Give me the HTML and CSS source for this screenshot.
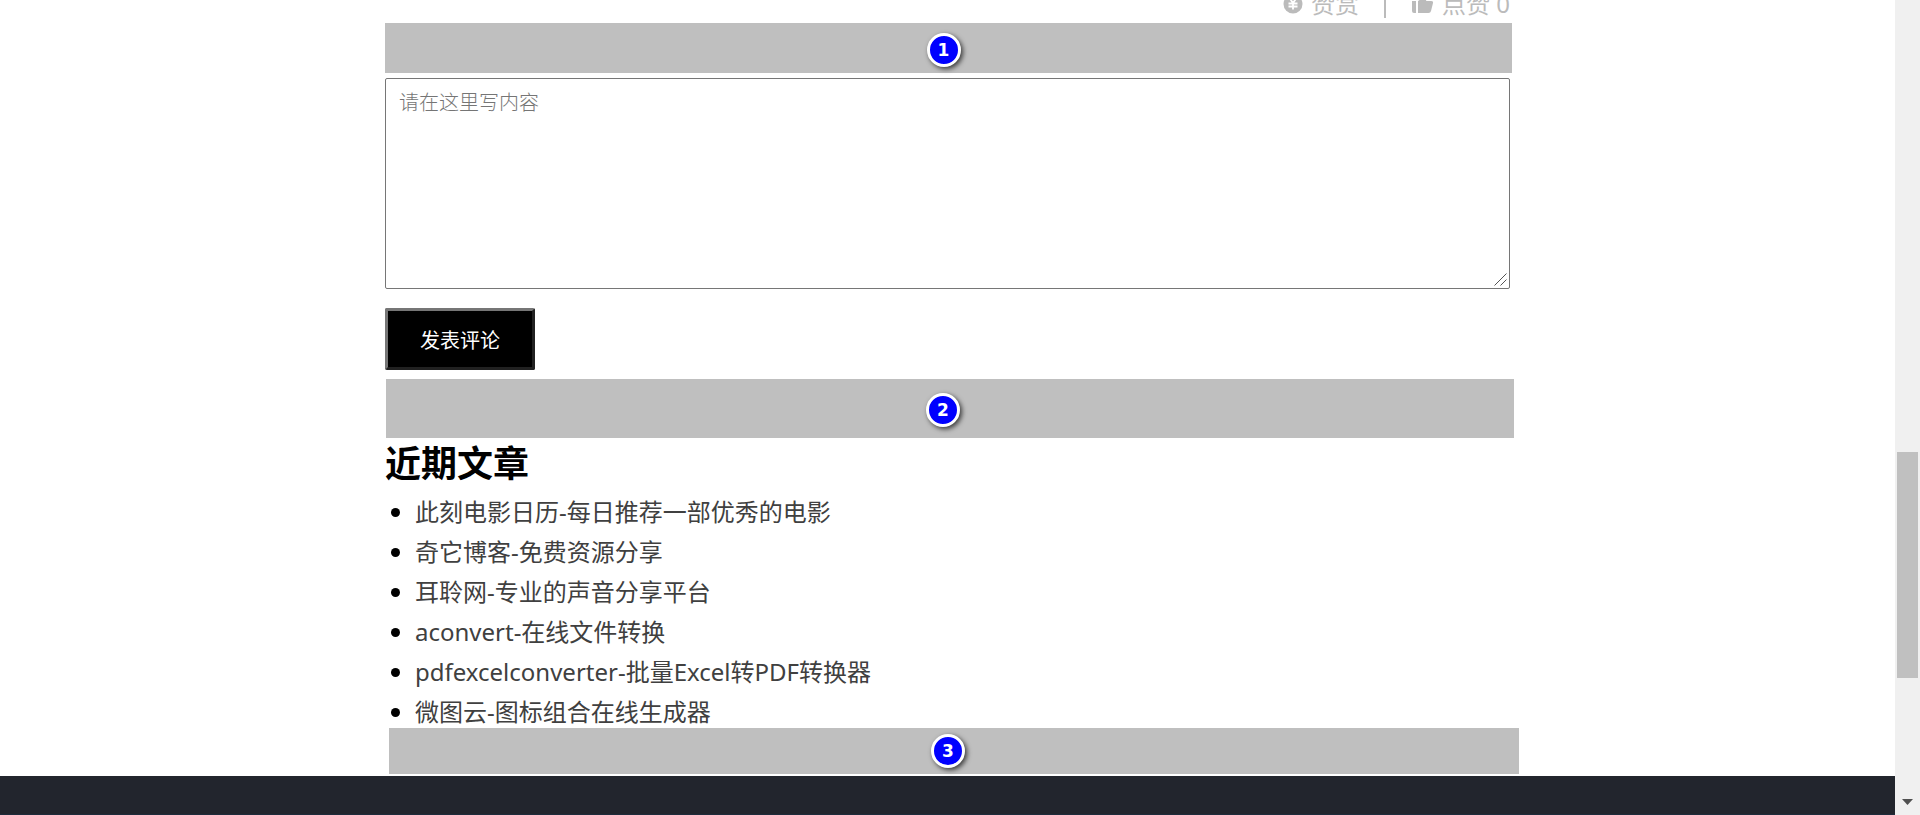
FILE: index.html
```html
<!DOCTYPE html>
<html lang="zh-CN">
<head>
<meta charset="utf-8">
<title>近期文章</title>
<link rel="stylesheet" href="styles.css">
</head>
<body>
<div class="window">
  <div class="page">
    <main class="content">
      <div class="actions">
        <a class="action" href="#reward">
          <svg class="icon" viewBox="0 0 20 20" aria-hidden="true"><circle cx="10" cy="10" r="9.500" fill="currentColor"/><path d="M6.500 4l3.500 5 3.500-5M10 9v6.500M5.500 9.500h9M5.500 12.500h9" fill="none" stroke="#fff" stroke-width="1.800"/></svg>
          <span>赞赏</span>
        </a>
        <span class="divider"></span>
        <a class="action" href="#like">
          <svg class="icon icon-like" viewBox="0 0 22 20" aria-hidden="true"><path d="M0 7h4v12H2Q0 19 0 17zM6 7q4-2 4-5 0-2 2-2 3 0 3 4l-1 3h5q2.500 0 2 2l-2 8q-.5 2-2.500 2H6z" fill="currentColor"/></svg>
          <span>点赞 0</span>
        </a>
      </div>
      <div class="slot slot-first"><span class="marker">1</span></div>
      <form class="comment">
        <div class="comment-field">
          <textarea class="comment-text" aria-label="评论内容" placeholder="请在这里写内容"></textarea>
          <svg class="grip" viewBox="0 0 13 13" aria-hidden="true"><path d="M.5 12.500l12-12M6.500 12.500l6-6" stroke="#555" fill="none"/></svg>
        </div>
        <button class="comment-submit" type="button">发表评论</button>
      </form>
      <div class="slot slot-second"><span class="marker">2</span></div>
      <section class="recent">
        <h2 class="recent-title">近期文章</h2>
        <ul class="recent-list">
          <li><a href="#p1">此刻电影日历-每日推荐一部优秀的电影</a></li>
          <li><a href="#p2">奇它博客-免费资源分享</a></li>
          <li><a href="#p3">耳聆网-专业的声音分享平台</a></li>
          <li><a href="#p4">aconvert-在线文件转换</a></li>
          <li><a href="#p5">pdfexcelconverter-批量Excel转PDF转换器</a></li>
          <li><a href="#p6">微图云-图标组合在线生成器</a></li>
        </ul>
      </section>
      <div class="slot slot-third"><span class="marker">3</span></div>
    </main>
    <footer class="footer"></footer>
  </div>
  <div class="scrollbar" aria-hidden="true">
    <div class="thumb"></div>
    <svg class="arrow" viewBox="0 0 11 6"><path d="M0 0h11L5.500 6z" fill="#505050"/></svg>
  </div>
</div>
</body>
</html>
```
FILE: styles.css
```css
* { box-sizing: border-box; }
body {
  margin: 0;
  overflow: hidden;
  background: #fff;
  color: #000;
  font-family: "Noto Sans", "Noto Sans CJK SC", sans-serif;
  font-size: 24px;
}
a { color: inherit; text-decoration: none; }
.window { display: flex; height: 100vh; }
.page { flex: 1; display: flex; flex-direction: column; min-width: 0; }
.content { width: 100%; max-width: 1125px; margin: 0 auto; }

.actions {
  display: flex;
  justify-content: flex-end;
  align-items: flex-end;
  height: 23px;
  color: #bbb;
  line-height: 38px;
}
.action { display: flex; align-items: center; gap: 8px; height: 38px; }
.icon { width: 20px; height: 20px; }
.icon-like { width: 22px; }
.divider { width: 2px; height: 24px; margin: 0 26px 5px 25px; background: #bbb; }

.slot { display: flex; align-items: center; justify-content: center; background: #bfbfbf; }
.slot-first { height: 50px; margin-right: -2px; padding: 4px 10px 0 0; }
.slot-second { height: 59px; margin: 9px -4px 0 1px; padding: 2px 14px 0 0; }
.slot-third { height: 46px; margin: 0 -9px 0 4px; padding-right: 12px; }
.marker {
  display: flex;
  align-items: center;
  justify-content: center;
  width: 34px;
  height: 34px;
  border: 3px solid #fff;
  border-radius: 50%;
  background: #00f;
  box-shadow: 2px 2px 5px rgba(0, 0, 0, .7);
  color: #fff;
  font: bold 17px/20px "DejaVu Sans", sans-serif;
}

.comment { display: flex; flex-direction: column; align-items: flex-start; padding-top: 5px; }
.comment-field { position: relative; display: flex; width: 100%; }
.comment-text {
  width: 100%;
  height: 211px;
  padding: 8px 13px;
  border: 1px solid #767676;
  border-radius: 2px;
  background: #fff;
  font: 300 20px/30px "Noto Sans CJK SC", sans-serif;
}
.comment-text::placeholder { color: #757575; }
.comment-text::-webkit-resizer { background: transparent; }
.grip {
  position: absolute;
  right: 3px;
  bottom: 3px;
  width: 13px;
  height: 13px;
  pointer-events: none;
}
.comment-submit {
  width: 150px;
  height: 62px;
  margin-top: 19px;
  padding: 2px 0 0;
  border: 3px outset #767676;
  border-radius: 2px;
  background: #000;
  color: #fff;
  font: 20px/30px "Noto Sans CJK SC", sans-serif;
}

.recent-title {
  margin: 0;
  padding-top: 6px;
  font-size: 36px;
  line-height: 40px;
  font-weight: 700;
}
.recent-list { margin: 0; padding: 8px 0 0 30px; line-height: 40px; }
.recent-list li { height: 40px; }
.recent-list li:last-child { height: 36px; }
.recent-list a { color: #404040; }

.footer { flex: 1; margin-top: 2px; background: #22252d; border-bottom: 1px solid #1e2c3c; }

.scrollbar {
  display: flex;
  flex-direction: column;
  justify-content: space-between;
  align-items: center;
  width: 25px;
  padding: 452px 0 10px;
  background: #f0f0f0;
}
.thumb { width: 21px; height: 226px; background: #c0c0c0; }
.arrow { width: 11px; height: 6px; }
```
